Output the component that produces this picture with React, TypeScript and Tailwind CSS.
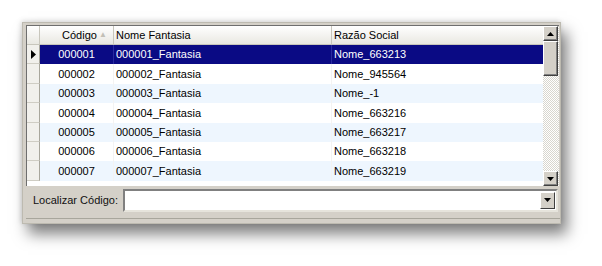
import React from 'react'

const rows: [string, string, string][] = [
  ['000001', '000001_Fantasia', 'Nome_663213'],
  ['000002', '000002_Fantasia', 'Nome_945564'],
  ['000003', '000003_Fantasia', 'Nome_-1'],
  ['000004', '000004_Fantasia', 'Nome_663216'],
  ['000005', '000005_Fantasia', 'Nome_663217'],
  ['000006', '000006_Fantasia', 'Nome_663218'],
  ['000007', '000007_Fantasia', 'Nome_663219'],
]

function Arrow({ up }: { up?: boolean }) {
  return (
    <svg width="7" height="4" viewBox="0 0 7 4">
      <path d={up ? 'M0 4 L3.5 0 L7 4 Z' : 'M0 0 L7 0 L3.5 4 Z'} fill="#000" />
    </svg>
  )
}

function ScrollButton({ up }: { up?: boolean }) {
  return (
    <div className="h-[15px] w-[15px] flex items-center justify-center bg-[#d4d0c8] border border-t-white border-l-white border-r-[#404040] border-b-[#404040] shadow-[inset_-1px_-1px_0_#808080]">
      <Arrow up={up} />
    </div>
  )
}

export default function App() {
  return (
    <div className="w-[602px] h-[266px] bg-white pt-[22px] pl-[22px] font-['Liberation_Sans',Arial,sans-serif] text-[11px] text-black">
      <div className="w-[539px] h-[202px] bg-[#d4d0c8] border border-[#bdbab0] shadow-[6px_10px_14px_rgba(0,0,0,0.5),-1px_-1px_5px_rgba(0,0,0,0.15)] flex flex-col pl-[3px] pt-[2px]">
        {/* grid */}
        <div className="h-[161px] w-[533px] flex border-t border-l border-[#6e6e6e] bg-white">
          <div className="flex-1 flex flex-col">
            {/* header */}
            <div className="h-[19px] flex bg-gradient-to-b from-white to-[#e9e8e2] border-b border-[#c8c6bc]">
              <div className="w-[13px] border-r border-[#c8c6bc]" />
              <div className="w-[74px] border-r border-[#c8c6bc] flex items-center justify-center relative">
                <span className="ml-[6px]">Código</span>
                <span className="absolute right-[6px] text-[8px] text-[#c2c0b6]">▲</span>
              </div>
              <div className="w-[218px] border-r border-[#c8c6bc] flex items-center pl-[2px]">Nome Fantasia</div>
              <div className="flex-1 flex items-center pl-[2px]">Razão Social</div>
            </div>
            {/* rows */}
            {rows.map((r, i) => {
              const sel = i === 0
              const bg = sel ? 'bg-[#0a0a84] text-white' : i % 2 === 0 ? 'bg-[#eef6fe]' : 'bg-white'
              return (
                <div key={r[0]} className="h-[19.4px] flex">
                  <div className="w-[13px] flex items-center justify-center bg-[#f1f0ec] border-r border-b border-r-[#a8a69c] border-b-[#cfcdc4]">
                    {sel && (
                      <svg width="5" height="9" viewBox="0 0 5 9">
                        <path d="M0 0 L5 4.5 L0 9 Z" fill="#000" />
                      </svg>
                    )}
                  </div>
                  <div className={`flex-1 flex ${bg}`}>
                    <div className={`w-[74px] flex items-center justify-center border-r ${sel ? 'border-[#2a2aa0]' : 'border-[#f3f3f3]'}`}>{r[0]}</div>
                    <div className={`w-[218px] flex items-center pl-[2px] border-r ${sel ? 'border-[#2a2aa0]' : 'border-[#f3f3f3]'}`}>{r[1]}</div>
                    <div className="flex-1 flex items-center pl-[2px]">{r[2]}</div>
                  </div>
                </div>
              )
            })}
          </div>
          {/* scrollbar */}
          <div className="w-[16px] flex flex-col bg-[repeating-conic-gradient(#d8d6ce_0_25%,#ffffff_0_50%)] bg-[length:2px_2px]">
            <ScrollButton up />
            <div className="h-[35px] w-[15px] bg-[#d4d0c8] border border-t-white border-l-white border-r-[#404040] border-b-[#404040] shadow-[inset_-1px_-1px_0_#808080]" />
            <div className="flex-1" />
            <ScrollButton />
          </div>
        </div>
        {/* search bar */}
        <div className="flex-1 flex items-center pr-[2px] pb-[4px] border-b border-[#a8a69c] mb-[4px]">
          <span className="ml-[7px] text-[11px] text-[#111]">Localizar Código:</span>
          <div className="ml-[5px] flex-1 h-[23px] bg-white border-2 border-t-[#808080] border-l-[#808080] border-r-[#e6e4dc] border-b-[#e6e4dc] flex justify-end items-center pr-[1px]">
            <div className="h-[17px] w-[15px] flex items-center justify-center bg-[#d4d0c8] border border-t-white border-l-white border-r-[#404040] border-b-[#404040]">
              <Arrow />
            </div>
          </div>
        </div>
      </div>
    </div>
  )
}
